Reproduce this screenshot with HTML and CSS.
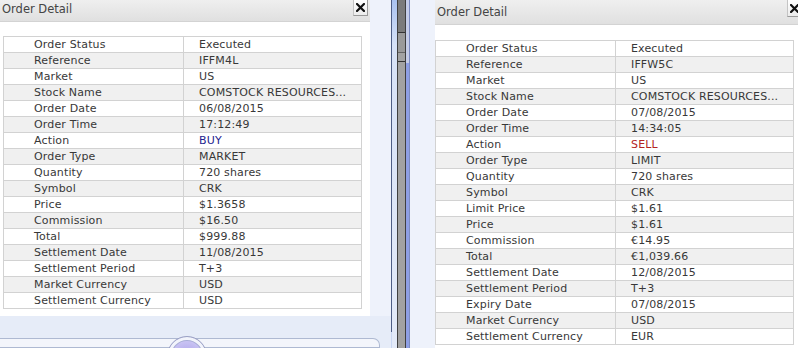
FILE: index.html
```html
<!DOCTYPE html>
<html lang="en">
<head>
    <meta charset="UTF-8">
    <meta name="viewport" content="width=device-width, initial-scale=1.0">
    <title>Order Detail</title>
    <link rel="stylesheet" href="styles.css">
</head>
<body>

<div class="screen">
    <div class="window window-left">
        <div class="dialog dialog-left">
            <div class="dialog-header">
                <span class="dialog-title">Order Detail</span>
                <button class="close-btn" aria-label="Close">
                    <svg width="9" height="9" viewBox="0 0 9 9"><path d="M1 1L8 8M8 1L1 8" stroke="#111" stroke-width="2.2" stroke-linecap="square"/></svg>
                </button>
            </div>
            <div class="dialog-body">
                <table class="detail-table">
                    <colgroup><col class="col-label"><col></colgroup>
                    <tr><td>Order Status</td><td>Executed</td></tr>
                    <tr><td>Reference</td><td>IFFM4L</td></tr>
                    <tr><td>Market</td><td>US</td></tr>
                    <tr><td>Stock Name</td><td>COMSTOCK RESOURCES...</td></tr>
                    <tr><td>Order Date</td><td>06/08/2015</td></tr>
                    <tr><td>Order Time</td><td>17:12:49</td></tr>
                    <tr><td>Action</td><td class="buy">BUY</td></tr>
                    <tr><td>Order Type</td><td>MARKET</td></tr>
                    <tr><td>Quantity</td><td>720 shares</td></tr>
                    <tr><td>Symbol</td><td>CRK</td></tr>
                    <tr><td>Price</td><td>$1.3658</td></tr>
                    <tr><td>Commission</td><td>$16.50</td></tr>
                    <tr><td>Total</td><td>$999.88</td></tr>
                    <tr><td>Settlement Date</td><td>11/08/2015</td></tr>
                    <tr><td>Settlement Period</td><td>T+3</td></tr>
                    <tr><td>Market Currency</td><td>USD</td></tr>
                    <tr><td>Settlement Currency</td><td>USD</td></tr>
                </table>
            </div>
        </div>
        <div class="window-footer">
            <div class="footer-bar"></div>
            <div class="footer-knob"></div>
        </div>
    </div>

    <div class="splitter">
        <div class="split-edge"></div>
        <div class="split-light"></div>
        <div class="split-dark"></div>
        <div class="split-thumb"></div>
        <div class="split-dark"></div>
        <div class="split-blue"></div>
        <div class="split-edge-soft"></div>
    </div>

    <div class="window window-right">
        <div class="dialog dialog-right">
            <div class="dialog-header">
                <span class="dialog-title">Order Detail</span>
                <button class="close-btn" aria-label="Close">
                    <svg width="9" height="9" viewBox="0 0 9 9"><path d="M1 1L8 8M8 1L1 8" stroke="#111" stroke-width="2.2" stroke-linecap="square"/></svg>
                </button>
            </div>
            <div class="dialog-body">
                <table class="detail-table">
                    <colgroup><col class="col-label"><col></colgroup>
                    <tr><td>Order Status</td><td>Executed</td></tr>
                    <tr><td>Reference</td><td>IFFW5C</td></tr>
                    <tr><td>Market</td><td>US</td></tr>
                    <tr><td>Stock Name</td><td>COMSTOCK RESOURCES...</td></tr>
                    <tr><td>Order Date</td><td>07/08/2015</td></tr>
                    <tr><td>Order Time</td><td>14:34:05</td></tr>
                    <tr><td>Action</td><td class="sell">SELL</td></tr>
                    <tr><td>Order Type</td><td>LIMIT</td></tr>
                    <tr><td>Quantity</td><td>720 shares</td></tr>
                    <tr><td>Symbol</td><td>CRK</td></tr>
                    <tr><td>Limit Price</td><td>$1.61</td></tr>
                    <tr><td>Price</td><td>$1.61</td></tr>
                    <tr><td>Commission</td><td>€14.95</td></tr>
                    <tr><td>Total</td><td>€1,039.66</td></tr>
                    <tr><td>Settlement Date</td><td>12/08/2015</td></tr>
                    <tr><td>Settlement Period</td><td>T+3</td></tr>
                    <tr><td>Expiry Date</td><td>07/08/2015</td></tr>
                    <tr><td>Market Currency</td><td>USD</td></tr>
                    <tr><td>Settlement Currency</td><td>EUR</td></tr>
                </table>
            </div>
        </div>
    </div>
</div>

</body>
</html>
```

FILE: styles.css
```css
body {
    margin: 0;
    padding: 0;
    font-family: "DejaVu Sans", Verdana, sans-serif;
    color: #333;
    background-color: #eef2fb;
}

.screen {
    display: flex;
    width: 798px;
    height: 348px;
    overflow: hidden;
}

.window {
    display: flex;
    flex-direction: column;
    background-color: #eef2fb;
    height: 348px;
}

.window-left {
    width: 391px;
    position: relative;
}

.window-right {
    width: 388px;
    padding-left: 25px;
    box-sizing: border-box;
}

.dialog {
    background-color: #fff;
}

.dialog-left {
    width: 370px;
    height: 323px;
}

.dialog-right {
    width: 365px;
    flex: 1;
}

.dialog-header {
    display: flex;
    justify-content: space-between;
    align-items: flex-start;
    background: linear-gradient(to bottom, #efefef, #e0e0e0);
    border-bottom: 1px solid #d3d3d3;
    box-sizing: border-box;
}

.dialog-left .dialog-header {
    height: 22px;
}

.dialog-right .dialog-header {
    height: 25px;
}

.dialog-title {
    font-size: 11.5px;
    color: #444;
    padding-left: 2px;
    line-height: 19px;
}

.dialog-right .dialog-title {
    line-height: 24px;
}

.close-btn {
    width: 15px;
    height: 16px;
    padding: 0;
    margin-right: 2px;
    border: 1px solid #c4c4c4;
    border-top: none;
    border-right-color: #9a9a9a;
    border-bottom-color: #9a9a9a;
    background: linear-gradient(to bottom, #ffffff, #ececec);
    display: flex;
    align-items: center;
    justify-content: center;
}

.dialog-right .close-btn {
    margin-right: -2px;
    height: 17px;
}

.dialog-body {
    padding-left: 3px;
}

.dialog-left .dialog-body {
    padding-top: 14px;
}

.dialog-right .dialog-body {
    padding-top: 15px;
    padding-left: 0;
}

.detail-table {
    border-collapse: collapse;
    table-layout: fixed;
    width: 359px;
    font-size: 11px;
    letter-spacing: 0.15px;
    color: #383838;
}

.col-label {
    width: 180px;
}

.detail-table td {
    padding: 0 0 0 15px;
    line-height: 15px;
    border: 1px solid #d2d2d2;
    white-space: nowrap;
    overflow: hidden;
}

.detail-table td:first-child {
    padding-left: 30px;
}

.detail-table tr:nth-child(even) td {
    background-color: #f0f0f0;
}

.buy {
    color: #23238e;
}

.sell {
    color: #b3241f;
}

.window-footer {
    flex: 1;
    background-color: #e6ecf8;
}

.footer-bar {
    margin-top: 22px;
    width: 380px;
    height: 10px;
    box-sizing: border-box;
    border: 1px solid #aeb9d2;
    border-left: none;
    border-radius: 0 7px 0 0;
    background-color: #f3f5fb;
}

.footer-knob {
    position: absolute;
    left: 167px;
    top: 336px;
    width: 40px;
    height: 40px;
    box-sizing: border-box;
    border-radius: 50%;
    border: 1px solid #9ba1c4;
    box-shadow: inset 0 0 0 3px #f2f4fb, inset 0 0 0 4px #a7acd6;
    background: radial-gradient(circle at 50% 55%, #a99fe8 0, #c6c0f2 55%, #e6e4fa 100%);
}

.splitter {
    display: flex;
    width: 19px;
    height: 348px;
}

.split-edge {
    width: 1px;
    background: linear-gradient(to bottom, #4d5d85 0, #4d5d85 332px, #c9d6f2 332px);
}

.split-light {
    width: 5px;
    background: linear-gradient(to bottom, #a9c2f0 0, #d7e2f7 45px, #e3eaf8 100%);
}

.split-dark {
    width: 1px;
    background-color: #3f3f3f;
}

.split-thumb {
    width: 7px;
    background: linear-gradient(to bottom,
        #7b7b7b 0, #7b7b7b 32px, #333 32px, #333 33px,
        #9a9a9a 33px, #9a9a9a 52px, #666 52px, #666 53px,
        #a3a3a3 53px, #a3a3a3 61px, #333 61px, #333 62px,
        #a2a2a2 62px);
}

.split-blue {
    width: 3px;
    background: linear-gradient(to bottom, #c5cde8 0, #c5cde8 63px, #8e9fe4 63px);
}

.split-edge-soft {
    width: 1px;
    background-color: #7d8cc0;
}
```
